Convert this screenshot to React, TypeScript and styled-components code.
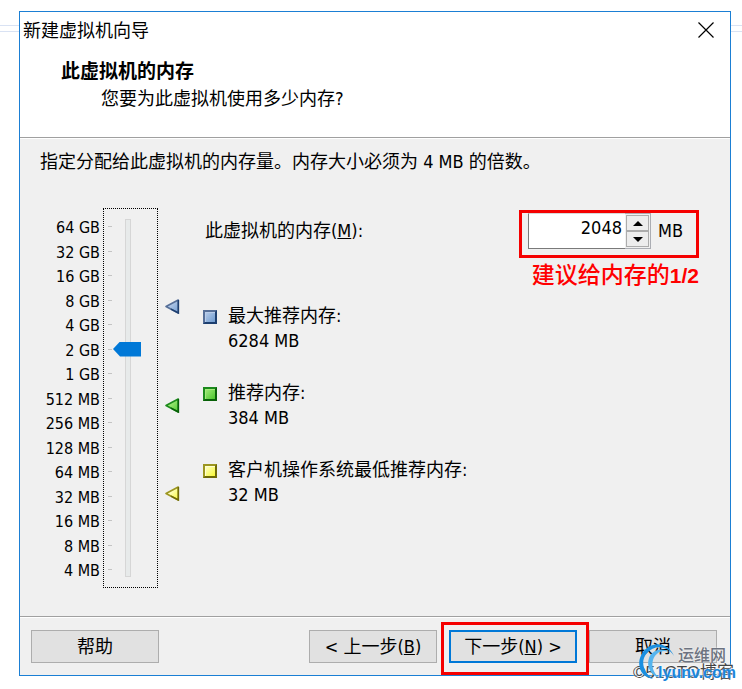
import React, { useState } from "react";
import styled, { createGlobalStyle, css } from "styled-components";

const GlobalStyle = createGlobalStyle`
  *, *::before, *::after { box-sizing: border-box; }
  body {
    margin: 0;
    background: #fff;
    color: #000;
    font-family: "DejaVu Sans Condensed", "Noto Sans CJK SC", sans-serif;
    font-size: 18px;
    line-height: 25px;
  }
  button, input { font: inherit; color: inherit; }
`;

const RED = "#f50000";

const Page = styled.div`
  position: relative;
  padding: 11px 11px 13px 19px;
  &::before {
    content: "";
    position: absolute;
    z-index: -1;
    top: 25px;
    left: 0;
    right: 0;
    height: 7px;
    border: 1px solid #d9e2f3;
    border-width: 1px 0;
  }
`;

const Dialog = styled.section`
  border: 1px solid #1b7fd4;
  background: #f0f0f0;
`;

const Header = styled.header`
  background: #fff;
  height: 126px;
  border-bottom: 1px solid #a0a0a0;
`;

const TitleBar = styled.div`
  display: flex;
  justify-content: space-between;
  align-items: center;
  height: 36px;
  padding: 0 16px 0 3px;
`;

const CloseButton = styled.button`
  display: flex;
  padding: 0;
  border: 0;
  background: none;
`;

const Heading = styled.h1`
  margin: 0;
  padding: 10px 0 0 41px;
  font-size: 19px;
  line-height: 26px;
`;

const Subheading = styled.p`
  margin: 2px 0 0 81px;
`;

const Body = styled.main`
  border-top: 1px solid #fff;
  padding: 10px 31px 28px 20px;
`;

const Intro = styled.p`
  margin: 0 0 34px;
`;

const Columns = styled.div`
  display: flex;
`;

const Scale = styled.ol`
  display: flex;
  flex-direction: column;
  justify-content: space-between;
  list-style: none;
  margin: 0;
  padding: 8px 0 5px;
  width: 60px;
  font-size: 16px;
  line-height: 24px;
  text-align: right;
`;

const SliderBox = styled.div`
  display: flex;
  width: 55px;
  height: 380px;
  margin-left: 3px;
  padding: 10px 4px;
  border: 1px dotted #000;
`;

const Ticks = styled.div`
  display: flex;
  flex-direction: column;
  justify-content: space-between;
  width: 5px;
  padding: 7px 1px 7px 0;
`;

const Tick = styled.span`
  height: 1px;
  background: #c4c4c4;
`;

const Slider = styled.input`
  appearance: none;
  writing-mode: vertical-lr;
  direction: rtl;
  width: 28px;
  height: 358px;
  margin: 0;
  outline: none;
  background:
    linear-gradient(#e7eaea, #e7eaea) 13px 1px / 4px 356px no-repeat,
    linear-gradient(#d6d6d6, #d6d6d6) 12px 0 / 6px 358px no-repeat;
  &::-webkit-slider-runnable-track { width: 28px; }
  &::-webkit-slider-thumb {
    appearance: none;
    width: 28px;
    height: 15px;
    background: #0078d7;
    clip-path: polygon(0 50%, 7px 0, 100% 0, 100% 100%, 7px 100%);
  }
`;

const Markers = styled.div`
  position: relative;
  width: 15px;
  margin: 17px 0 20px 7px;
`;

const MarkerSlot = styled.div<{ $level: number }>`
  position: absolute;
  left: 0;
  bottom: ${(p) => (p.$level / 14) * 100}%;
  display: flex;
  margin-bottom: -6px;
`;

const Settings = styled.div`
  flex: 1;
  padding: 2px 0 0 23px;
`;

const MemoryRow = styled.div`
  display: flex;
  justify-content: space-between;
  align-items: flex-start;
`;

const MemoryLabel = styled.label`
  padding: 8px 0 0 2px;
`;

const Callout = styled.div`
  display: flex;
  align-items: flex-start;
  width: 180px;
  height: 48px;
  padding-left: 6px;
  border: 3px solid ${RED};
`;

const AmountInput = styled.input`
  width: 97px;
  height: 36px;
  padding: 0 3px 7px;
  border: 1px solid #7a7a7a;
  border-width: 1px 0 1px 1px;
  border-top-color: #d8d8d8;
  border-radius: 0;
  background: #fff;
  text-align: right;
  outline: none;
`;

const Stepper = styled.div`
  display: flex;
  flex-direction: column;
  width: 26px;
  height: 36px;
  padding: 1px;
  border: 1px solid #abadb3;
  border-left-width: 0;
`;

const StepButton = styled.button`
  display: flex;
  flex: 1;
  align-items: center;
  justify-content: center;
  padding: 0;
  border: 1px solid #acacac;
  background: #ededed;
`;

const Unit = styled.span`
  margin: 5px 0 0 7px;
`;

const Note = styled.p`
  margin: 2px 0 14px;
  text-align: right;
  color: #ff0000;
  font: 500 23px/26px "Noto Sans CJK SC", sans-serif;
`;

const Fraction = styled.span`
  font: bold 21px/26px "Liberation Sans", sans-serif;
`;

const Legend = styled.dl`
  display: flex;
  flex-direction: column;
  gap: 27px;
  margin: 0;
`;

const LegendItem = styled.div`
  display: grid;
  grid-template-columns: 14px 1fr;
  column-gap: 11px;
`;

type Tone = "blue" | "green" | "yellow";

const tones: Record<Tone, { light: string; fill: string; edge: string; dark: string }> = {
  blue: { light: "#b9cdea", fill: "#6f9bd0", edge: "#566f98", dark: "#1d3f70" },
  green: { light: "#a4ec7c", fill: "#4cc52e", edge: "#1c8a1c", dark: "#086008" },
  yellow: { light: "#ffffd0", fill: "#f8f832", edge: "#9c9620", dark: "#6f6a06" },
};

const Swatch = styled.span<{ $tone: Tone }>`
  width: 14px;
  height: 14px;
  margin-top: 7px;
  border: 2px solid;
  ${({ $tone }) => {
    const t = tones[$tone];
    return css`
      border-color: ${t.edge} ${t.dark} ${t.dark} ${t.edge};
      background: linear-gradient(135deg, ${t.light}, ${t.fill});
      box-shadow: inset 1px 1px 0 ${t.light};
    `;
  }}
`;

const Term = styled.dt``;

const Amount = styled.dd`
  grid-column: 2;
  margin: 0;
`;

const Footer = styled.footer`
  display: flex;
  justify-content: space-between;
  height: 59px;
  padding: 12px 13px 0 11px;
  border-top: 1px solid #a0a0a0;
  box-shadow: inset 0 1px 0 #fff;
`;

const Actions = styled.div`
  display: flex;
  gap: 12px;
`;

const Button = styled.button<{ $primary?: boolean }>`
  width: 128px;
  height: 33px;
  margin-top: 1px;
  padding: 0;
  border: ${(p) => (p.$primary ? "2px solid #0078d7" : "1px solid #adadad")};
  background: #e1e1e1;
`;

const Highlight = styled.div`
  position: relative;
  display: flex;
  align-items: flex-start;
  &::after {
    content: "";
    position: absolute;
    top: -7px;
    left: -8px;
    width: 148px;
    height: 53px;
    border: 3px solid ${RED};
    pointer-events: none;
  }
`;

const Watermark = styled.div`
  position: absolute;
  right: 4px;
  bottom: 4px;
  width: 104px;
  height: 44px;
  pointer-events: none;
`;

const Ring = styled.svg`
  position: absolute;
  left: 4px;
  top: 0;
`;

const MarkText = styled.span<{ $kind: "blog" | "name" | "site" }>`
  position: absolute;
  white-space: nowrap;
  ${({ $kind }) =>
    ({
      blog: css`
        right: 4px;
        bottom: 2px;
        font: 17px/20px "Liberation Sans", "Noto Sans CJK SC", sans-serif;
        color: #444;
        text-shadow: 0 0 2px #fff, 1px 1px 1px #fff;
      `,
      name: css`
        right: 12px;
        top: 3px;
        font: 500 16px/20px "Noto Sans CJK SC", sans-serif;
        color: #6d7380;
        text-shadow: 0 0 2px #fff;
      `,
      site: css`
        right: 2px;
        bottom: 2px;
        font: bold 16px/20px "Liberation Sans", sans-serif;
        color: #1a86dc;
        text-shadow: 0 0 2px #fff;
      `,
    })[$kind]}
`;

const steps = [
  "64 GB", "32 GB", "16 GB", "8 GB", "4 GB", "2 GB", "1 GB", "512 MB",
  "256 MB", "128 MB", "64 MB", "32 MB", "16 MB", "8 MB", "4 MB",
];

const hints: { tone: Tone; label: string; mb: number }[] = [
  { tone: "blue", label: "最大推荐内存:", mb: 6284 },
  { tone: "green", label: "推荐内存:", mb: 384 },
  { tone: "yellow", label: "客户机操作系统最低推荐内存:", mb: 32 },
];

function Marker({ tone }: { tone: Tone }) {
  const t = tones[tone];
  return (
    <svg width="15" height="15" viewBox="0 0 15 15" aria-hidden="true">
      <defs>
        <linearGradient id={`mark-${tone}`} x1="0" y1="0" x2="1" y2="1">
          <stop offset="0.3" stopColor={t.light} />
          <stop offset="1" stopColor={t.fill} />
        </linearGradient>
      </defs>
      <path d="M1 7.5 13.2 1V14Z" fill={`url(#mark-${tone})`} stroke={t.edge} strokeWidth="1.6" strokeLinejoin="round" />
      <path d="M13.4 1V14L6 10.2" fill="none" stroke={t.dark} strokeWidth="1.5" />
    </svg>
  );
}

export default function App() {
  const [level, setLevel] = useState(9);
  const [amount, setAmount] = useState("2048");
  const move = (next: number) => {
    const l = Math.max(0, Math.min(14, next));
    setLevel(l);
    setAmount(String(4 * 2 ** l));
  };

  return (
    <>
      <GlobalStyle />
      <Page>
        <Dialog role="dialog" aria-label="新建虚拟机向导">
          <Header>
            <TitleBar>
              <span>新建虚拟机向导</span>
              <CloseButton aria-label="关闭">
                <svg width="16" height="16" viewBox="0 0 16 16" aria-hidden="true">
                  <path d="M.5.5l15 15M15.5.5l-15 15" stroke="#000" strokeWidth="1.2" />
                </svg>
              </CloseButton>
            </TitleBar>
            <Heading>此虚拟机的内存</Heading>
            <Subheading>您要为此虚拟机使用多少内存?</Subheading>
          </Header>
          <Body>
            <Intro>指定分配给此虚拟机的内存量。内存大小必须为 4 MB 的倍数。</Intro>
            <Columns>
              <Scale>
                {steps.map((s) => <li key={s}>{s}</li>)}
              </Scale>
              <SliderBox>
                <Ticks aria-hidden="true">
                  {steps.map((s) => <Tick key={s} />)}
                </Ticks>
                <Slider
                  type="range"
                  min={0}
                  max={14}
                  value={level}
                  aria-label="内存"
                  onChange={(e) => move(Number(e.target.value))}
                />
              </SliderBox>
              <Markers>
                {hints.map((h) => (
                  <MarkerSlot key={h.tone} $level={Math.log2(h.mb / 4)}>
                    <Marker tone={h.tone} />
                  </MarkerSlot>
                ))}
              </Markers>
              <Settings>
                <MemoryRow>
                  <MemoryLabel htmlFor="memory">此虚拟机的内存(<u>M</u>):</MemoryLabel>
                  <Callout>
                    <AmountInput id="memory" value={amount} onChange={(e) => setAmount(e.target.value)} />
                    <Stepper>
                      <StepButton aria-label="增加" onClick={() => move(level + 1)}>
                        <svg width="10" height="5" viewBox="0 0 10 5"><path d="M0 5 5 0l5 5z" /></svg>
                      </StepButton>
                      <StepButton aria-label="减少" onClick={() => move(level - 1)}>
                        <svg width="10" height="5" viewBox="0 0 10 5"><path d="M0 0 5 5l5-5z" /></svg>
                      </StepButton>
                    </Stepper>
                    <Unit>MB</Unit>
                  </Callout>
                </MemoryRow>
                <Note>建议给内存的<Fraction>1/2</Fraction></Note>
                <Legend>
                  {hints.map((h) => (
                    <LegendItem key={h.tone}>
                      <Swatch $tone={h.tone} />
                      <Term>{h.label}</Term>
                      <Amount>{h.mb} MB</Amount>
                    </LegendItem>
                  ))}
                </Legend>
              </Settings>
            </Columns>
          </Body>
          <Footer>
            <Button>帮助</Button>
            <Actions>
              <Button>&lt; 上一步(<u>B</u>)</Button>
              <Highlight>
                <Button $primary>下一步(<u>N</u>) &gt;</Button>
              </Highlight>
              <Button>取消</Button>
            </Actions>
          </Footer>
        </Dialog>
        <Watermark>
          <MarkText $kind="blog">©51CTO博客</MarkText>
          <Ring width="38" height="40" viewBox="0 0 38 40" aria-hidden="true">
            <path d="M36 15C31 3 18 0 9 7 0 14-1 26 5 33c3 3 6 4 10 5C5 31 2 20 9 12 16 4 29 4 36 15Z" fill="#1a8fe0" />
            <path d="M31 11C24 6 14 9 11 17c-3 9 2 17 10 20-5-5-8-11-6-18 2-6 8-11 16-8Z" fill="#55b4ee" />
          </Ring>
          <MarkText $kind="name">运维网</MarkText>
          <MarkText $kind="site">lyunv.com</MarkText>
        </Watermark>
      </Page>
    </>
  );
}
